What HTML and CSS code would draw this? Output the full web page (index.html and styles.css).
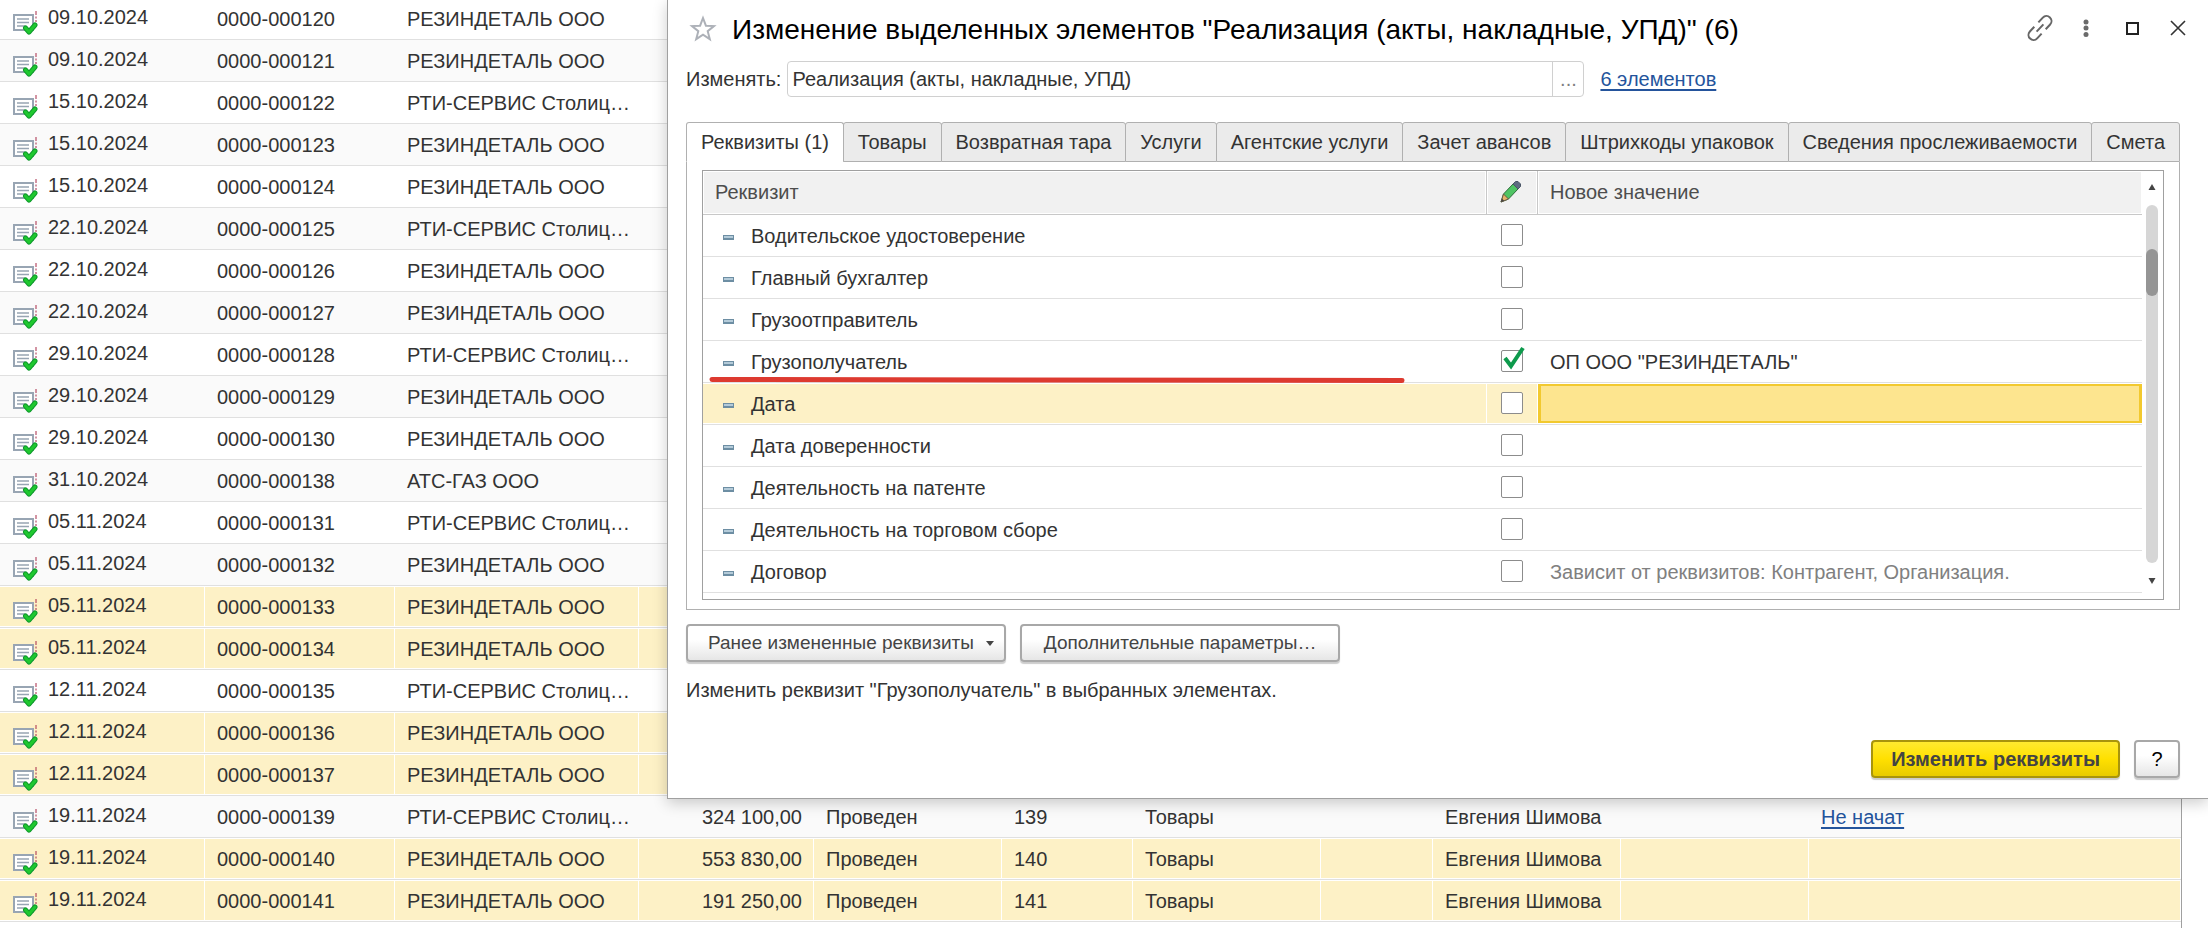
FILE: index.html
```html
<!DOCTYPE html>
<html lang="ru">
<head>
    <meta charset="UTF-8">
    <meta name="viewport" content="width=device-width, initial-scale=1.0">
    <title>Изменение выделенных элементов</title>
    <link rel="stylesheet" href="styles.css">
</head>
<body>
    <svg class="sprite" aria-hidden="true">
        <symbol id="doc" viewBox="0 0 26 30">
            <rect x="2" y="8" width="19" height="15" fill="#fff" stroke="#98a5b3" stroke-width="2"/>
            <path d="M5 12h12M5 15.500h12M5 19h8" stroke="#98a5b3" stroke-width="1.600"/>
            <path d="M24 4v4M24 9.500v2M24 13v2" stroke="#a82a48" stroke-width="1"/>
            <path d="M13.500 21l3.500 4 6-7" fill="none" stroke="#0f9a2c" stroke-width="5" stroke-linecap="round" stroke-linejoin="round"/>
            <path d="M13.500 21l3.500 4 6-7" fill="none" stroke="#1fc82f" stroke-width="3" stroke-linecap="round" stroke-linejoin="round"/>
        </symbol>
    </svg>

    <div class="journal-box">
        <table class="journal">
            <colgroup>
                <col class="c-date"><col class="c-num"><col class="c-org"><col class="c-sum"><col class="c-state"><col class="c-short">
                <col class="c-kind"><col class="c-gap"><col class="c-user"><col class="c-user"><col>
            </colgroup>
            <tbody>
                <tr><td><svg class="doc"><use href="#doc"/></svg>09.10.2024</td><td>0000-000120</td><td>РЕЗИНДЕТАЛЬ ООО</td><td colspan="8"></td></tr>
                <tr><td><svg class="doc"><use href="#doc"/></svg>09.10.2024</td><td>0000-000121</td><td>РЕЗИНДЕТАЛЬ ООО</td><td colspan="8"></td></tr>
                <tr><td><svg class="doc"><use href="#doc"/></svg>15.10.2024</td><td>0000-000122</td><td>РТИ-СЕРВИС Столиц…</td><td colspan="8"></td></tr>
                <tr><td><svg class="doc"><use href="#doc"/></svg>15.10.2024</td><td>0000-000123</td><td>РЕЗИНДЕТАЛЬ ООО</td><td colspan="8"></td></tr>
                <tr><td><svg class="doc"><use href="#doc"/></svg>15.10.2024</td><td>0000-000124</td><td>РЕЗИНДЕТАЛЬ ООО</td><td colspan="8"></td></tr>
                <tr><td><svg class="doc"><use href="#doc"/></svg>22.10.2024</td><td>0000-000125</td><td>РТИ-СЕРВИС Столиц…</td><td colspan="8"></td></tr>
                <tr><td><svg class="doc"><use href="#doc"/></svg>22.10.2024</td><td>0000-000126</td><td>РЕЗИНДЕТАЛЬ ООО</td><td colspan="8"></td></tr>
                <tr><td><svg class="doc"><use href="#doc"/></svg>22.10.2024</td><td>0000-000127</td><td>РЕЗИНДЕТАЛЬ ООО</td><td colspan="8"></td></tr>
                <tr><td><svg class="doc"><use href="#doc"/></svg>29.10.2024</td><td>0000-000128</td><td>РТИ-СЕРВИС Столиц…</td><td colspan="8"></td></tr>
                <tr><td><svg class="doc"><use href="#doc"/></svg>29.10.2024</td><td>0000-000129</td><td>РЕЗИНДЕТАЛЬ ООО</td><td colspan="8"></td></tr>
                <tr><td><svg class="doc"><use href="#doc"/></svg>29.10.2024</td><td>0000-000130</td><td>РЕЗИНДЕТАЛЬ ООО</td><td colspan="8"></td></tr>
                <tr><td><svg class="doc"><use href="#doc"/></svg>31.10.2024</td><td>0000-000138</td><td>АТС-ГАЗ ООО</td><td colspan="8"></td></tr>
                <tr><td><svg class="doc"><use href="#doc"/></svg>05.11.2024</td><td>0000-000131</td><td>РТИ-СЕРВИС Столиц…</td><td colspan="8"></td></tr>
                <tr><td><svg class="doc"><use href="#doc"/></svg>05.11.2024</td><td>0000-000132</td><td>РЕЗИНДЕТАЛЬ ООО</td><td colspan="8"></td></tr>
                <tr class="selected"><td><svg class="doc"><use href="#doc"/></svg>05.11.2024</td><td>0000-000133</td><td>РЕЗИНДЕТАЛЬ ООО</td><td colspan="8"></td></tr>
                <tr class="selected"><td><svg class="doc"><use href="#doc"/></svg>05.11.2024</td><td>0000-000134</td><td>РЕЗИНДЕТАЛЬ ООО</td><td colspan="8"></td></tr>
                <tr><td><svg class="doc"><use href="#doc"/></svg>12.11.2024</td><td>0000-000135</td><td>РТИ-СЕРВИС Столиц…</td><td colspan="8"></td></tr>
                <tr class="selected"><td><svg class="doc"><use href="#doc"/></svg>12.11.2024</td><td>0000-000136</td><td>РЕЗИНДЕТАЛЬ ООО</td><td colspan="8"></td></tr>
                <tr class="selected"><td><svg class="doc"><use href="#doc"/></svg>12.11.2024</td><td>0000-000137</td><td>РЕЗИНДЕТАЛЬ ООО</td><td colspan="8"></td></tr>
                <tr>
                    <td><svg class="doc"><use href="#doc"/></svg>19.11.2024</td><td>0000-000139</td><td>РТИ-СЕРВИС Столиц…</td>
                    <td class="sum">324 100,00</td><td>Проведен</td><td>139</td><td>Товары</td><td></td><td>Евгения Шимова</td><td></td><td><a href="#">Не начат</a></td>
                </tr>
                <tr class="selected">
                    <td><svg class="doc"><use href="#doc"/></svg>19.11.2024</td><td>0000-000140</td><td>РЕЗИНДЕТАЛЬ ООО</td>
                    <td class="sum">553 830,00</td><td>Проведен</td><td>140</td><td>Товары</td><td></td><td>Евгения Шимова</td><td></td><td></td>
                </tr>
                <tr class="selected">
                    <td><svg class="doc"><use href="#doc"/></svg>19.11.2024</td><td>0000-000141</td><td>РЕЗИНДЕТАЛЬ ООО</td>
                    <td class="sum">191 250,00</td><td>Проведен</td><td>141</td><td>Товары</td><td></td><td>Евгения Шимова</td><td></td><td></td>
                </tr>
            </tbody>
        </table>
    </div>

    <div class="dialog" role="dialog" aria-labelledby="dialog-title">
        <header class="titlebar">
            <button class="icon-button" aria-label="В избранное">
                <svg width="28" height="28" viewBox="0 0 28 28"><path d="M14 2l2.900 7.700 8.100.4-6.300 5.100 2.100 7.900-6.800-4.500-6.800 4.500 2.100-7.900L3 10.100l8.100-.4z" fill="none" stroke="#adb1b8" stroke-width="2"/></svg>
            </button>
            <h1 id="dialog-title">Изменение выделенных элементов "Реализация (акты, накладные, УПД)" (6)</h1>
            <div class="window-tools">
                <button class="icon-button" aria-label="Ссылка">
                    <svg width="28" height="28" viewBox="0 0 28 28"><path transform="rotate(-47 14 13)" d="M11 8H4.500a5 5 0 0 0 0 10H11M17 8h6.500a5 5 0 0 1 0 10H17M9 13h10" fill="none" stroke="#666" stroke-width="2"/></svg>
                </button>
                <button class="icon-button" aria-label="Ещё">
                    <svg width="28" height="28" viewBox="0 0 28 28" fill="#6a6a6a"><circle cx="14" cy="7" r="2.500"/><circle cx="14" cy="13" r="2.500"/><circle cx="14" cy="19.500" r="2.500"/></svg>
                </button>
                <button class="icon-button" aria-label="Развернуть">
                    <svg width="28" height="28" viewBox="0 0 28 28" fill="none" stroke="#222" stroke-width="2"><rect x="9" y="8" width="11" height="11"/></svg>
                </button>
                <button class="icon-button" aria-label="Закрыть">
                    <svg width="28" height="28" viewBox="0 0 28 28" stroke="#333" stroke-width="1.600"><path d="M7 6l14 14M21 6L7 20"/></svg>
                </button>
            </div>
        </header>

        <div class="target">
            <label for="target">Изменять:</label>
            <div class="target-box">
                <input id="target" type="text" value="Реализация (акты, накладные, УПД)">
                <button aria-label="Выбрать">...</button>
            </div>
            <a href="#">6 элементов</a>
        </div>

        <div class="tabs" role="tablist">
            <button class="tab active" role="tab" aria-selected="true">Реквизиты (1)</button>
            <button class="tab" role="tab">Товары</button>
            <button class="tab" role="tab">Возвратная тара</button>
            <button class="tab" role="tab">Услуги</button>
            <button class="tab" role="tab">Агентские услуги</button>
            <button class="tab" role="tab">Зачет авансов</button>
            <button class="tab" role="tab">Штрихкоды упаковок</button>
            <button class="tab" role="tab">Сведения прослеживаемости</button>
            <button class="tab" role="tab">Смета</button>
        </div>

        <div class="tab-panel" role="tabpanel">
            <div class="grid-box">
                <table class="attributes">
                    <colgroup><col class="a-name"><col class="a-flag"><col></colgroup>
                    <thead>
                        <tr>
                            <th>Реквизит</th>
                            <th class="flag">
                                <svg class="pencil" width="24" height="24" viewBox="0 0 24 24">
                                    <path d="M2 22l2.500-8L14 4l5 5-9.500 10z" fill="#4fc463" stroke="#2f6b3b" stroke-width="1"/>
                                    <path d="M2 22l2.500-8 5 5z" fill="#e8b26a" stroke="#6b5a45" stroke-width="1"/>
                                    <path d="M14 4l2.500-2.500h2.500L21.500 4v2.500L19 9z" fill="#5d6b80" stroke="#4a5566" stroke-width="1"/>
                                    <path d="M2 22l1-3.500 2.200 2.200z" fill="#444"/>
                                </svg>
                            </th>
                            <th>Новое значение</th>
                        </tr>
                    </thead>
                    <tbody>
                        <tr><td><i class="dash"></i><label for="a1">Водительское удостоверение</label></td><td class="flag"><input type="checkbox" id="a1"></td><td></td></tr>
                        <tr><td><i class="dash"></i><label for="a2">Главный бухгалтер</label></td><td class="flag"><input type="checkbox" id="a2"></td><td></td></tr>
                        <tr><td><i class="dash"></i><label for="a3">Грузоотправитель</label></td><td class="flag"><input type="checkbox" id="a3"></td><td></td></tr>
                        <tr>
                            <td class="marked"><i class="dash"></i><label for="a4">Грузополучатель</label>
                                <svg class="marker" viewBox="0 0 696 8" preserveAspectRatio="none"><path d="M3 3.500L693 4.500" stroke="#dd3a30" stroke-width="5" stroke-linecap="round"/></svg>
                            </td>
                            <td class="flag">
                                <span class="check"><input type="checkbox" id="a4" checked><svg class="tick" width="26" height="28" viewBox="0 0 26 28"><path d="M4 14l6 8L22 4" fill="none" stroke="#0d9a4c" stroke-width="4"/></svg></span>
                            </td>
                            <td>ОП ООО "РЕЗИНДЕТАЛЬ"</td>
                        </tr>
                        <tr class="current"><td><i class="dash"></i><label for="a5">Дата</label></td><td class="flag"><input type="checkbox" id="a5"></td><td class="cursor"></td></tr>
                        <tr><td><i class="dash"></i><label for="a6">Дата доверенности</label></td><td class="flag"><input type="checkbox" id="a6"></td><td></td></tr>
                        <tr><td><i class="dash"></i><label for="a7">Деятельность на патенте</label></td><td class="flag"><input type="checkbox" id="a7"></td><td></td></tr>
                        <tr><td><i class="dash"></i><label for="a8">Деятельность на торговом сборе</label></td><td class="flag"><input type="checkbox" id="a8"></td><td></td></tr>
                        <tr><td><i class="dash"></i><label for="a9">Договор</label></td><td class="flag"><input type="checkbox" id="a9"></td><td class="hint">Зависит от реквизитов: Контрагент, Организация.</td></tr>
                    </tbody>
                </table>
                <div class="scrollbar">
                    <svg width="8" height="6" viewBox="0 0 8 6"><path d="M4 0l3.500 6h-7z" fill="#444"/></svg>
                    <div class="track"><div class="thumb"></div></div>
                    <svg width="8" height="6" viewBox="0 0 8 6"><path d="M4 6l3.500-6h-7z" fill="#444"/></svg>
                </div>
            </div>
        </div>

        <div class="actions">
            <button class="button menu">Ранее измененные реквизиты<svg width="8" height="5" viewBox="0 0 8 5"><path d="M0 0h8L4 5z" fill="#444"/></svg></button>
            <button class="button">Дополнительные параметры…</button>
        </div>

        <p class="summary">Изменить реквизит "Грузополучатель" в выбранных элементах.</p>

        <footer class="dialog-footer">
            <button class="button primary">Изменить реквизиты</button>
            <button class="button help">?</button>
        </footer>
    </div>
</body>
</html>
```

FILE: styles.css
```css
* {
    box-sizing: border-box;
}

body {
    margin: 0;
    min-height: 100vh;
    position: relative;
    overflow: hidden;
    display: flex;
    background-color: #ffffff;
    color: #333333;
    font-family: "Liberation Sans", Arial, sans-serif;
    font-size: 20px;
    line-height: 24px;
}

button, input {
    font: inherit;
    color: inherit;
}

a {
    color: #24549c;
    text-underline-offset: 3px;
}

table {
    width: 100%;
    border-collapse: separate;
    border-spacing: 0;
    table-layout: fixed;
}

.sprite {
    position: absolute;
    width: 0;
    height: 0;
}

/* document journal */
.journal-box {
    flex: 1;
    margin: -2px 26px 0 0;
    border-right: 1px solid #a0a0a0;
}

.journal td {
    height: 42px;
    padding: 0 12px;
    border-bottom: 1px solid #e0e0e0;
    white-space: nowrap;
}

.journal tr:nth-child(even) td {
    background-color: #fafafa;
}

.journal tr.selected td {
    background-color: #fdf1c6;
    box-shadow: inset 0 1px #ffffff, inset 0 -1px #ffffff, inset -1px 0 #ffffff;
}

.c-date { width: 205px; }
.c-num { width: 190px; }
.c-org { width: 244px; }
.c-sum { width: 175px; }
.c-state { width: 188px; }
.c-short { width: 131px; }
.c-kind { width: 188px; }
.c-gap { width: 112px; }
.c-user { width: 188px; }

.journal .sum {
    text-align: right;
}

.doc {
    width: 26px;
    height: 30px;
    margin: -5px 10px -5px 0;
    vertical-align: -8px;
}

/* dialog window */
.dialog {
    position: absolute;
    top: 0;
    left: 667px;
    right: 0;
    padding: 0 28px 20px 18px;
    background-color: #ffffff;
    border: 1px solid #a0a0a0;
    border-width: 0 0 1px 1px;
    box-shadow: 0 4px 14px rgba(0, 0, 0, 0.2);
}

.titlebar {
    display: flex;
    align-items: center;
    height: 61px;
    margin-right: -12px;
    padding: 0 0 2px 3px;
}

.titlebar h1 {
    flex: 1;
    margin: 0 0 0 15px;
    color: #000000;
    font-size: 28px;
    font-weight: normal;
    line-height: 32px;
    white-space: nowrap;
}

.icon-button {
    display: flex;
    padding: 0;
    border: none;
    background: none;
    cursor: pointer;
}

.icon-button svg {
    overflow: visible;
}

.window-tools {
    display: flex;
    gap: 18px;
    padding-bottom: 2px;
}

.target {
    display: flex;
    align-items: center;
}

.target-box {
    display: flex;
    width: 797px;
    height: 36px;
    margin: 0 16px 0 6px;
    border: 1px solid #d0d0d0;
    border-radius: 4px;
}

.target-box input {
    flex: 1;
    min-width: 0;
    padding: 0 4px;
    border: none;
    background: none;
}

.target-box button {
    width: 31px;
    padding: 0;
    border: none;
    border-left: 1px solid #d0d0d0;
    background: none;
    color: #808080;
}

.tabs {
    display: flex;
    margin-top: 25px;
}

.tab {
    flex: auto;
    height: 40px;
    padding: 0;
    margin-left: -1px;
    border: 1px solid #b0b0b0;
    border-radius: 3px 3px 0 0;
    background-color: #ebebeb;
    white-space: nowrap;
}

.tab.active {
    margin-left: 0;
    border-bottom-color: #ffffff;
    background-color: #ffffff;
}

.tab-panel {
    padding: 8px 15px 9px;
    border: 1px solid #b0b0b0;
    border-top: none;
}

.grid-box {
    display: flex;
    padding-bottom: 6px;
    border: 1px solid #a0a0a0;
}

.attributes {
    flex: 1;
}

.attributes th {
    height: 44px;
    padding: 0 12px 2px;
    border-bottom: 1px solid #c8c8c8;
    border-right: 1px solid #c8c8c8;
    background-color: #f1f1f1;
    color: #4d4d4d;
    font-weight: normal;
    text-align: left;
    box-shadow: inset 0 0 0 1px #ffffff;
}

.attributes th:last-child {
    border-right: none;
}

.attributes td {
    height: 42px;
    padding: 0 12px;
    border-bottom: 1px solid #e0e0e0;
}

.attributes td:first-child {
    padding-left: 20px;
}

.a-name { width: 784px; }
.a-flag { width: 51px; }

.attributes .flag {
    padding: 0 2px 2px 0;
    text-align: center;
}

.pencil {
    display: block;
    margin: 0 auto;
}

.dash {
    display: inline-block;
    width: 11px;
    height: 5px;
    margin-right: 17px;
    border: 1px solid #6d8ea3;
    border-bottom-width: 2px;
    background-color: #b4cbd9;
    vertical-align: middle;
}

.marked,
.check {
    position: relative;
}

.marker {
    position: absolute;
    left: 6px;
    bottom: -2px;
    width: 696px;
    height: 8px;
}

input[type="checkbox"] {
    appearance: none;
    display: block;
    width: 22px;
    height: 22px;
    margin: 0 auto;
    border: 1px solid #8c8c8c;
    border-radius: 2px;
    background-color: #ffffff;
}

.check {
    display: block;
    width: 22px;
    margin: 0 auto;
}

.tick {
    position: absolute;
    left: 0;
    bottom: 0;
    pointer-events: none;
}

.current td {
    background-color: #fdf1c6;
    box-shadow: inset 0 1px #ffffff, inset 0 -1px #ffffff, inset -1px 0 #ffffff;
}

.current .cursor {
    background-color: #fde58f;
    box-shadow: inset 0 1px #ffffff, inset 0 -1px #ffffff, inset 0 0 0 3px #f2c92f;
}

.hint {
    color: #808080;
}

.scrollbar {
    display: flex;
    flex-direction: column;
    align-items: center;
    gap: 15px;
    width: 21px;
    padding: 13px 1px 9px 0;
}

.track {
    flex: 1;
    width: 12px;
    padding-top: 44px;
    border-radius: 6px;
    background-color: #d6d6d6;
}

.thumb {
    height: 47px;
    border-radius: 6px;
    background-color: #959595;
}

.actions {
    display: flex;
    gap: 14px;
    margin-top: 14px;
}

.button {
    height: 38px;
    padding: 0 22px;
    border: 2px solid #a8a8a8;
    border-radius: 4px;
    background: linear-gradient(#ffffff 40%, #e6e6e6);
    box-shadow: 0 2px 1px rgba(0, 0, 0, 0.2);
    color: #444444;
    font-size: 19px;
    white-space: nowrap;
}

.button.menu {
    display: flex;
    align-items: center;
    gap: 12px;
    padding: 0 10px 0 20px;
}

.summary {
    margin: 16px 0 0;
}

.dialog-footer {
    display: flex;
    justify-content: flex-end;
    gap: 14px;
    margin-top: 38px;
}

.button.primary {
    padding: 0 18px;
    border-color: #a8940c;
    background: linear-gradient(#ffea30, #ffe000 50%, #e8cb00);
    font-size: 20px;
    font-weight: bold;
}

.button.help {
    width: 46px;
    padding: 0;
    color: #000000;
    font-size: 20px;
}
```
